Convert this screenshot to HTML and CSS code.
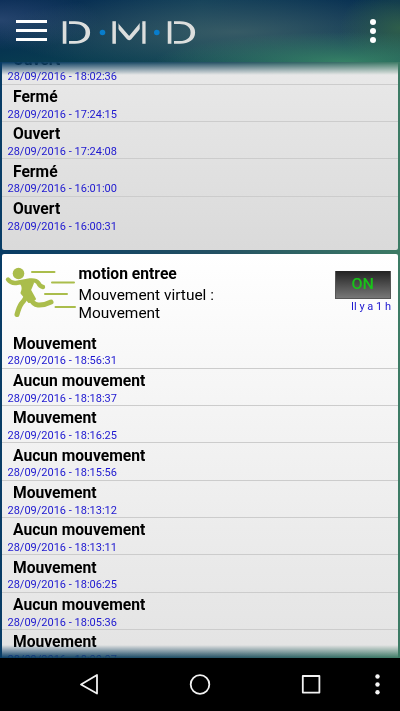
FILE: index.html
```html
<!DOCTYPE html>
<html lang="fr">
<head>
<meta charset="utf-8">
<title>DMD</title>
<link rel="stylesheet" href="styles.css">
</head>
<body>
<div class="screen">
  <header class="topbar">
    <div class="menu"><span></span><span></span><span></span></div>
    <svg class="logo" width="140" height="40" viewBox="0 -5 140 40">
      <defs>
        <linearGradient id="metal" x1="0" y1="0" x2="1" y2="1">
          <stop offset="0" stop-color="#b9bec0"/><stop offset=".45" stop-color="#fff"/><stop offset="1" stop-color="#d3d3ce"/>
        </linearGradient>
        <mask id="slits" maskUnits="userSpaceOnUse" x="0" y="-5" width="140" height="40">
          <rect y="-5" width="140" height="40" fill="#fff"/>
          <path d="M8.700 0v35M113.700 0v35M58.200 0v35M82 0v35" stroke="#000" stroke-width="2.600"/>
        </mask>
      </defs>
      <g class="letters" mask="url(#slits)" fill="url(#metal)" stroke="#dcdedd">
        <text x="0.500" y="26.500" textLength="32" lengthAdjust="spacingAndGlyphs">D</text>
        <text x="50" y="26.500" textLength="40" lengthAdjust="spacingAndGlyphs">M</text>
        <text x="105.500" y="26.500" textLength="32" lengthAdjust="spacingAndGlyphs">D</text>
      </g>
      <circle cx="43.500" cy="16.500" r="2.8" fill="#087dcc"/><circle cx="97.800" cy="16.500" r="2.8" fill="#087dcc"/>
    </svg>
    <div class="more"><i></i><i></i><i></i></div>
  </header>
  <main class="viewport">
    <section class="card card-door">
      <ul class="log">
        <li><b>Ouvert</b><time>28/09/2016 - 18:02:36</time></li>
        <li><b>Fermé</b><time>28/09/2016 - 17:24:15</time></li>
        <li><b>Ouvert</b><time>28/09/2016 - 17:24:08</time></li>
        <li><b>Fermé</b><time>28/09/2016 - 16:01:00</time></li>
        <li><b>Ouvert</b><time>28/09/2016 - 16:00:31</time></li>
      </ul>
    </section>
    <section class="card card-motion">
      <div class="summary">
        <svg class="runner" width="74" height="54" viewBox="0 0 74 54" fill="none" stroke="#aabd4b" stroke-linecap="round" stroke-linejoin="round">
          <circle cx="16.500" cy="7.500" r="5.800" fill="#aabd4b" stroke="none"/>
          <path stroke-width="4.400" d="M6 13.500Q9 17.500 14 17L28 14.500Q34 14 36 16.500Q38 20.500 41 21"/>
          <path fill="#aabd4b" stroke-width="2" d="M19 17.500L28 14.500L31 17Q29.500 21 28 24L33 33L27 36L19.500 27Q22 21 19 17.500Z"/>
          <path stroke-width="5" d="M28 32Q31 38.500 36 39Q42 39.500 49 36"/>
          <path stroke-width="5" d="M24 31Q22 35 19.500 37.500Q17 41 15 48.500"/>
          <path stroke-width="2" d="M30 6H52.500M50 16.500H72M43 28H65M53.500 41H73"/>
        </svg>
        <div class="info"><h2>motion entree</h2><p>Mouvement virtuel :<br>Mouvement</p></div>
        <div class="state">
          <div class="switch"><span>ON</span></div>
          <span class="ago">Il y a 1 h</span>
        </div>
      </div>
      <ul class="log">
        <li><b>Mouvement</b><time>28/09/2016 - 18:56:31</time></li>
        <li><b>Aucun mouvement</b><time>28/09/2016 - 18:18:37</time></li>
        <li><b>Mouvement</b><time>28/09/2016 - 18:16:25</time></li>
        <li><b>Aucun mouvement</b><time>28/09/2016 - 18:15:56</time></li>
        <li><b>Mouvement</b><time>28/09/2016 - 18:13:12</time></li>
        <li><b>Aucun mouvement</b><time>28/09/2016 - 18:13:11</time></li>
        <li><b>Mouvement</b><time>28/09/2016 - 18:06:25</time></li>
        <li><b>Aucun mouvement</b><time>28/09/2016 - 18:05:36</time></li>
        <li><b>Mouvement</b><time>28/09/2016 - 18:00:07</time></li>
      </ul>
    </section>
  </main>
  <nav class="navbar">
    <svg width="400" height="53" viewBox="0 0 400 53" fill="none" stroke="#f2f2f2" stroke-width="1.8" stroke-linejoin="round">
      <path d="M97 17V35.500L81 26.500Z"/>
      <circle cx="200" cy="26.500" r="9.300"/>
      <rect x="302.800" y="18" width="16.600" height="16.600"/>
      <g fill="#f5f5f5" stroke="none"><circle cx="377.500" cy="18.500" r="2.200"/><circle cx="377.500" cy="26.500" r="2.200"/><circle cx="377.500" cy="34.300" r="2.200"/></g>
    </svg>
  </nav>
</div>
</body>
</html>
```
FILE: styles.css
```css
* { box-sizing: border-box; }
body { margin: 0; font-family: Roboto, "Liberation Sans", sans-serif; color: #000; }
ul, h2, p { margin: 0; padding: 0; list-style: none; }
.screen {
  display: flex; flex-direction: column; width: 400px; height: 711px; overflow: hidden;
  background: linear-gradient(90deg, #083c65, #245163 55%, #3d7b65);
}
.topbar {
  height: 62px; flex: none; display: flex; align-items: center; padding: 0 24px 0 15.500px;
  background:
    radial-gradient(ellipse 190px 30px at 345px 62px, rgba(61,140,105,.85), transparent),
    radial-gradient(ellipse 60px 44px at 400px 28px, rgba(55,105,70,.75), transparent),
    radial-gradient(ellipse 240px 40px at 235px 32px, rgba(65,98,105,.8), transparent),
    radial-gradient(ellipse 100px 30px at 0 20px, rgba(44,74,115,.85), transparent),
    linear-gradient(180deg, transparent 30%, rgba(10,70,80,.6)),
    linear-gradient(90deg, #032650, #103e58 50%, #042b50);
}
.menu { width: 31px; display: grid; gap: 6px; margin-bottom: 1px; }
.menu span { height: 3px; background: #fff; }
.logo { margin: 0 0 1px 12px; overflow: visible; }
.letters { font: 300 30px Lato, sans-serif; stroke-width: 1.6px; }
.more { margin-left: auto; display: grid; gap: 3px; }
.more i { width: 6px; height: 6px; border-radius: 50%; background: #fff; }
.viewport {
  height: 596px; flex: none; overflow: hidden; padding: 0 2px;
  mask-image: linear-gradient(180deg, transparent, #000 13px, #000 583px, transparent);
}
.card { border-radius: 2px; }
.card-door { margin-top: -14.700px; height: 202.500px; background: linear-gradient(#eaeaea, #dadada); }
.card-motion { margin-top: 4px; height: 440px; padding-top: 7px; background: linear-gradient(#fff, #e2e2e2 95%); }
.log li { height: 37.350px; padding: 3.300px 6px 0 5.500px; border-bottom: 1px solid #ccc; display: flex; flex-direction: column; }
.card-door li:last-child { border: 0; }
.log b { padding-left: 5.500px; font-size: 15.650px; line-height: 18px; white-space: nowrap; }
.log time { margin-top: 1.700px; font-size: 11px; line-height: 14px; color: #1d17d0; }
.card-motion .log { margin-top: .5px; }
.summary { height: 70px; display: flex; padding: 0 7px 0 0; }
.runner { margin-top: 5px; flex: none; }
.info { padding: 4px 0 0 2.500px; flex: 1; }
.info h2 { font-size: 15.650px; line-height: 18px; }
.info p { margin-top: 3px; font-size: 15.450px; line-height: 18px; }
.state { display: flex; flex-direction: column; align-items: flex-end; padding-top: 10px; }
.switch {
  width: 56px; height: 28px; display: grid; place-items: center;
  border: solid #555; border-width: 0 1px 1px; background: linear-gradient(#222, #777);
}
.switch span { font: 500 14px/14px Roboto, sans-serif; color: #18c418; transform: scaleX(1.15); }
.ago { margin-top: 1px; font-size: 11px; line-height: 14px; color: #1d17d0; }
.navbar { height: 53px; flex: none; background: #000; }
.navbar svg { display: block; }
```
